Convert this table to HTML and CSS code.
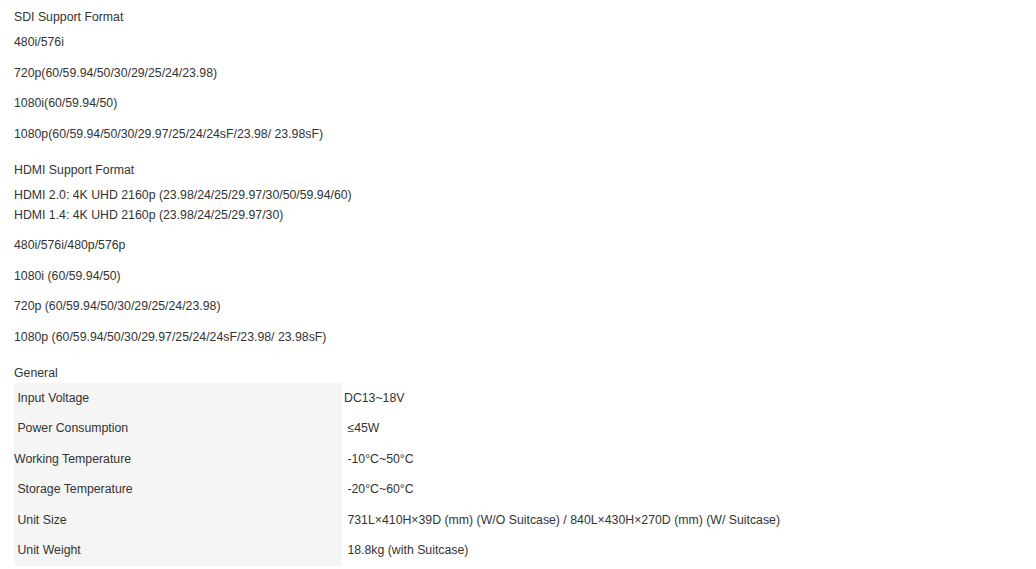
FILE: index.html
```html
<!DOCTYPE html>
<html lang="en">
<head>
    <meta charset="UTF-8">
    <meta name="viewport" content="width=device-width, initial-scale=1.0">
    <title>Specifications</title>
    <link rel="stylesheet" href="styles.css">
</head>
<body>
    <div class="specs">
        <div class="spec-section">
            <div class="spec-title">SDI Support Format</div>
            <p>480i/576i</p>
            <p>720p(60/59.94/50/30/29/25/24/23.98)</p>
            <p>1080i(60/59.94/50)</p>
            <p>1080p(60/59.94/50/30/29.97/25/24/24sF/23.98/ 23.98sF)</p>
        </div>

        <div class="spec-section">
            <div class="spec-title">HDMI Support Format</div>
            <p>HDMI 2.0: 4K UHD 2160p (23.98/24/25/29.97/30/50/59.94/60)<br>HDMI 1.4: 4K UHD 2160p (23.98/24/25/29.97/30)</p>
            <p>480i/576i/480p/576p</p>
            <p>1080i (60/59.94/50)</p>
            <p>720p (60/59.94/50/30/29/25/24/23.98)</p>
            <p>1080p (60/59.94/50/30/29.97/25/24/24sF/23.98/ 23.98sF)</p>
        </div>

        <div class="spec-section">
            <div class="spec-title">General</div>
            <div class="spec-table">
                <div class="spec-row">
                    <div class="spec-label">&nbsp;Input Voltage</div>
                    <div class="spec-value">DC13~18V</div>
                </div>
                <div class="spec-row">
                    <div class="spec-label">&nbsp;Power Consumption</div>
                    <div class="spec-value">&nbsp;≤45W</div>
                </div>
                <div class="spec-row">
                    <div class="spec-label">Working Temperature</div>
                    <div class="spec-value">&nbsp;-10°C~50°C</div>
                </div>
                <div class="spec-row">
                    <div class="spec-label">&nbsp;Storage Temperature</div>
                    <div class="spec-value">&nbsp;-20°C~60°C</div>
                </div>
                <div class="spec-row">
                    <div class="spec-label">&nbsp;Unit Size</div>
                    <div class="spec-value">&nbsp;731L×410H×39D (mm) (W/O Suitcase) / 840L×430H×270D (mm) (W/ Suitcase)</div>
                </div>
                <div class="spec-row">
                    <div class="spec-label">&nbsp;Unit Weight</div>
                    <div class="spec-value">&nbsp;18.8kg (with Suitcase)</div>
                </div>
            </div>
        </div>
    </div>
</body>
</html>
```

FILE: styles.css
```css
body {
    font-family: 'Liberation Sans', Arial, sans-serif;
    font-size: 12.3px;
    color: #333333;
    background: #ffffff;
    margin: 0;
    padding: 7px 14px 0 14px;
}
.spec-section {
    margin-bottom: 16px;
}
.spec-title {
    line-height: 20px;
    margin-bottom: 5px;
}
.spec-section p {
    margin: 0 0 10.5px 0;
    line-height: 20px;
}
.spec-table {
    display: flex;
    flex-direction: column;
    margin-top: -5px;
}
.spec-row {
    display: grid;
    grid-template-columns: 328px 1fr;
    height: 30.5px;
    line-height: 30.5px;
}
.spec-label {
    background: #f5f5f5;
    white-space: nowrap;
}
.spec-value {
    padding-left: 2px;
    white-space: nowrap;
}
```
